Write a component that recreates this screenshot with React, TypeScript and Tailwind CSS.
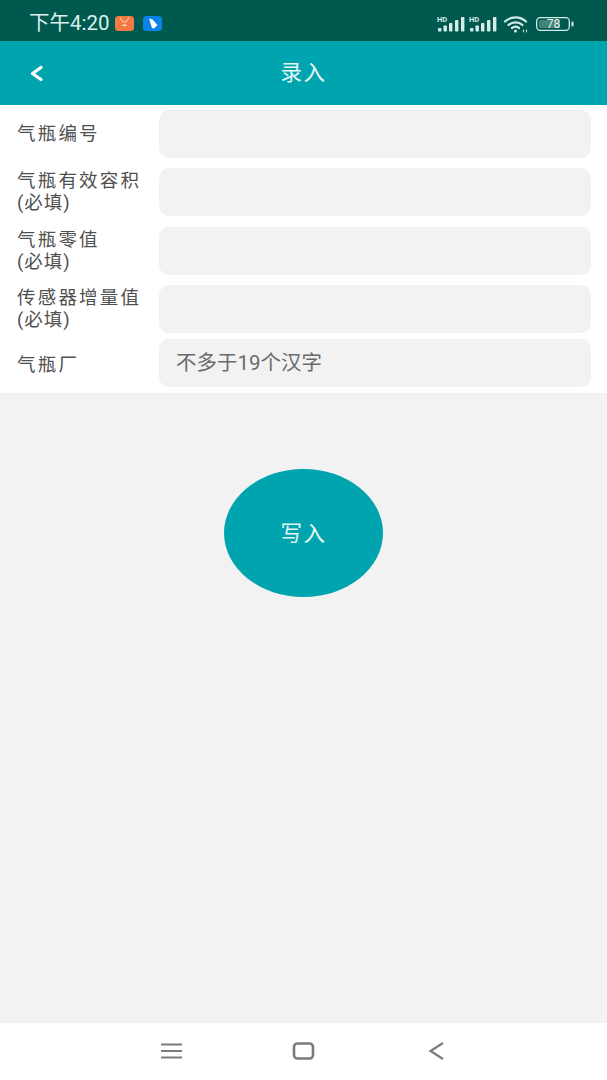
const cjk = "font-['Roboto','Noto_Sans_CJK_SC',sans-serif]";

function Signal() {
  return (
    <svg width="28" height="18" viewBox="0 0 28 18" fill="#d5ece8">
      <text x="0" y="6.500" fontSize="7.500" fontWeight="700" fontFamily="Roboto, sans-serif">HD</text>
      <rect x="1" y="13" width="3.400" height="3.500" rx="0.800" />
      <rect x="6.500" y="10.500" width="3.400" height="6" rx="0.800" />
      <rect x="12" y="8" width="3.400" height="8.500" rx="0.800" />
      <rect x="18" y="5" width="3.400" height="11.500" rx="0.800" />
      <rect x="24" y="2" width="3.400" height="14.500" rx="0.800" />
    </svg>
  );
}

function Row({ label, note, rowClass, labelClass, value }: { label: string; note?: boolean; rowClass: string; labelClass?: string; value?: string }) {
  return (
    <div className={`flex items-center pl-[17px] pr-4 ${rowClass}`}>
      <div className={`w-[142px] shrink-0 text-[18.500px] leading-[22px] tracking-[2.200px] text-[#4f4f4f] ${labelClass ?? ""}`}>
        <div>{label}</div>
        {note && <div className="tracking-[1px]">(必填)</div>}
      </div>
      <div className="flex h-[48px] flex-1 items-center rounded-[10px] bg-[#f2f2f2] pl-[17px] text-[20.500px] text-[#6a6a6a]">
        {value}
      </div>
    </div>
  );
}

export default function App() {
  return (
    <div className={`flex h-[1080px] w-[607px] flex-col overflow-hidden bg-[#f2f2f2] ${cjk}`}>
      <div className="flex h-[41px] shrink-0 items-center justify-between bg-[#00594f] pl-[29px] pr-[33px] pt-[6px]">
        <div className="flex items-center">
          <span className="text-[20.500px] leading-none text-[#dcefeb]">下午4:20</span>
          <svg className="ml-[5px]" width="19" height="15" viewBox="0 0 19 15">
            <rect width="19" height="15" rx="3.500" fill="#f47a45" />
            <path d="M5.500 1.500c.5 3 2 4.500 4 4.500s3.500-1.500 4-4.500" fill="none" stroke="#ffd9c4" strokeWidth="1" />
            <rect x="7.500" y="8.500" width="4" height="1.500" fill="#ffd9c4" />
          </svg>
          <svg className="ml-[9px]" width="19" height="15" viewBox="0 0 19 15">
            <rect width="19" height="15" rx="3.500" fill="#0a84e6" />
            <path d="M6 2.500l3.500 1 5 5.500-3.500 3.500-2-.5z" fill="#ffffff" />
          </svg>
        </div>
        <div className="flex items-center">
          <Signal />
          <span className="ml-[4px]"><Signal /></span>
          <svg className="ml-[6px]" width="26" height="18" viewBox="0 0 26 18" fill="none" stroke="#d5ece8" strokeWidth="2.200" strokeLinecap="round">
            <path d="M2 6.500C8 1 17 1 23 6.500" />
            <path d="M5.500 10c4-3.500 10-3.500 14 0" />
            <path d="M9 13c2-1.500 5-1.500 7 0" />
            <circle cx="12.500" cy="16" r="1.500" fill="#d5ece8" stroke="none" />
            <path d="M20.500 15v2M23.500 15v2" strokeWidth="1" />
          </svg>
          <svg className="ml-[7px]" width="38" height="14" viewBox="0 0 38 14">
            <rect x="0.700" y="0.700" width="32.600" height="12.600" rx="3.500" fill="none" stroke="#d5ece8" strokeWidth="1.300" />
            <rect x="3" y="3" width="21" height="8" rx="1" fill="#3f8578" />
            <rect x="35.500" y="4.500" width="2" height="5" rx="1" fill="#d5ece8" />
            <text x="17.500" y="11" textAnchor="middle" fontSize="12" fontFamily="Roboto, sans-serif" fill="#e6f4f1">78</text>
          </svg>
        </div>
      </div>

      <div className="relative flex h-[64px] shrink-0 items-center justify-center bg-[#00a4ae]">
        <svg className="absolute left-[29px] top-[24px]" width="15" height="17" viewBox="0 0 15 17" fill="none" stroke="#ffffff" strokeWidth="3.200" strokeLinecap="round" strokeLinejoin="round">
          <path d="M12 2.500 3.500 8.500 12 14.500" />
        </svg>
        <span className="text-[21.500px] tracking-[1.500px] text-[#e4f6f6]">录入</span>
      </div>

      <div className="flex h-[288px] shrink-0 flex-col bg-white">
        <Row label="气瓶编号" rowClass="mt-[5px]" />
        <Row label="气瓶有效容积" note rowClass="mt-[10px]" />
        <Row label="气瓶零值" note rowClass="mt-[10.500px]" />
        <Row label="传感器增量值" note rowClass="mt-[10.500px]" />
        <Row label="气瓶厂" rowClass="mt-[6px]" labelClass="pt-[4px]" value="不多于19个汉字" />
      </div>

      <div className="flex flex-1 justify-center pt-[76px]">
        <div className="flex h-[128px] w-[159px] items-center justify-center rounded-[50%] bg-[#00a4ae] pt-[2px] text-[21.500px] tracking-[1.500px] text-[#e4f6f6]">
          写入
        </div>
      </div>

      <div className="flex h-[57px] shrink-0 items-center justify-center bg-white pb-[2px]">
        <svg width="22" height="18" viewBox="0 0 22 18" fill="none" stroke="#7b7b7b" strokeWidth="2.200">
          <path d="M0 2.500h21M0 9h21M0 15.500h21" />
        </svg>
        <svg className="ml-[109px]" width="24" height="20" viewBox="0 0 24 20" fill="none" stroke="#7b7b7b" strokeWidth="2.600">
          <rect x="2" y="2.500" width="19" height="15" rx="3.500" />
        </svg>
        <svg className="ml-[112px]" width="18" height="20" viewBox="0 0 18 20" fill="none" stroke="#7b7b7b" strokeWidth="2.200">
          <path d="M15 2 2.500 10 15 18" />
        </svg>
      </div>
    </div>
  );
}
